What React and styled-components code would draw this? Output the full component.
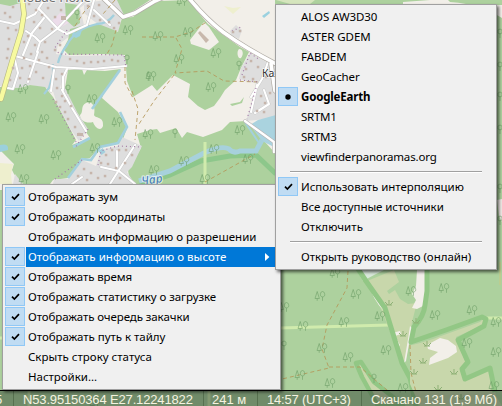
import React from 'react';
import styled, { createGlobalStyle } from 'styled-components';

const GlobalStyle = createGlobalStyle`
  html, body { margin: 0; padding: 0; overflow: hidden; }
`;

const Viewport = styled.main`
  position: relative;
  width: 502px;
  height: 406px;
  overflow: hidden;
  display: flex;
  flex-direction: column;
  justify-content: flex-end;
`;

const MapCanvas = styled.svg`
  position: absolute;
  inset: 0;
`;

const Menu = styled.div`
  position: absolute;
  left: ${(p) => p.$x}px;
  top: ${(p) => p.$y}px;
  width: ${(p) => p.$w}px;
  box-sizing: border-box;
  padding: 2px;
  border: 1px solid #a0a0a0;
  background: #f0f0f0;
  box-shadow: 2px 2px 3px rgba(0, 0, 0, 0.6);
  font: 11.5px/20px 'Noto Sans', sans-serif;
  color: #000;
`;

const MenuRow = styled.div`
  display: flex;
  height: 20px;
`;

const Mark = styled.span`
  box-sizing: border-box;
  flex: none;
  width: 20px;
  height: 19px;
  display: flex;
  align-items: center;
  justify-content: center;
  border: 1px solid ${(p) => (p.$on ? '#90c8f6' : 'transparent')};
  background: ${(p) => (p.$on ? '#c0dcf3' : 'transparent')};
`;

const Label = styled.span`
  flex: 1;
  height: 20px;
  margin-left: 1px;
  padding-left: 2px;
  white-space: nowrap;
  letter-spacing: ${(p) => p.$ls ?? -0.03}px;
  font-weight: ${(p) => (p.$bold ? 700 : 400)};
  color: ${(p) => (p.$active ? '#fff' : '#000')};
  background: ${(p) => (p.$active ? '#0078d7' : 'transparent')};
  display: flex;
  align-items: center;
  justify-content: space-between;
`;

const Arrow = styled.svg`
  margin-right: 8px;
`;

const Separator = styled.div`
  height: 10px;
  box-sizing: border-box;
  padding: 4px 12px 0;
  &::before {
    content: '';
    display: block;
    height: 1px;
    background: #a0a0a0;
    border-bottom: 1px solid #fff;
  }
`;

const StatusBar = styled.footer`
  position: relative;
  height: 16px;
  box-sizing: border-box;
  border-top: 1px solid #000;
  background: rgba(35, 50, 38, 0.44);
  display: flex;
  font: 13px/15px 'Liberation Sans', sans-serif;
  color: #f5f3e0;
`;

const StatusCell = styled.div`
  box-sizing: border-box;
  flex: none;
  width: ${(p) => p.$w}px;
  padding-left: ${(p) => p.$pad}px;
  text-indent: ${(p) => p.$shift || 0}px;
  border-right: 1px solid #56704f;
  white-space: nowrap;
  letter-spacing: ${(p) => p.$ls || 0}px;
  line-height: 17px;
  &:last-child { border-right: 0; }
`;

const Check = () => (
  <svg width="9" height="8" viewBox="0 0 9 8">
    <path d="M1 3.6 L3.4 6 L8 1.2" fill="none" stroke="#000" strokeWidth="1.7" />
  </svg>
);

const Dot = () => (
  <svg width="6" height="6" viewBox="0 0 6 6">
    <circle cx="3" cy="3" r="2.7" />
  </svg>
);

function Item({ text, mark, ls, bold, active }) {
  return (
    <MenuRow>
      <Mark $on={!!mark}>
        {mark === 'check' && <Check />}
        {mark === 'dot' && <Dot />}
      </Mark>
      <Label $ls={ls} $bold={bold} $active={active}>
        {text}
        {active && (
          <Arrow width="5" height="8" viewBox="0 0 5 8">
            <path d="M0 0 L4.4 4 L0 8Z" fill="#fff" />
          </Arrow>
        )}
      </Label>
    </MenuRow>
  );
}

const statusItems = [
  { text: 'Отображать зум', mark: 'check' },
  { text: 'Отображать координаты', mark: 'check', ls: -0.05 },
  { text: 'Отображать информацию о разрешении', ls: 0 },
  { text: 'Отображать информацию о высоте', mark: 'check', active: true, ls: 0.04 },
  { text: 'Отображать время', mark: 'check', ls: -0.09 },
  { text: 'Отображать статистику о загрузке', mark: 'check', ls: -0.07 },
  { text: 'Отображать очередь закачки', mark: 'check', ls: -0.09 },
  { text: 'Отображать путь к тайлу', mark: 'check', ls: -0.04 },
  { text: 'Скрыть строку статуса', ls: 0 },
  { text: 'Настройки...' },
];

const sources = [
  { text: 'ALOS AW3D30', ls: -0.07 },
  { text: 'ASTER GDEM', ls: -0.05 },
  { text: 'FABDEM' },
  { text: 'GeoCacher', ls: -0.08 },
  { text: 'GoogleEarth', mark: 'dot', bold: true, ls: -0.16 },
  { text: 'SRTM1', ls: -0.25 },
  { text: 'SRTM3', ls: -0.25 },
  { text: 'viewfinderpanoramas.org', ls: -0.17 },
];

const sourceOptions = [
  { text: 'Использовать интерполяцию', mark: 'check', ls: -0.06 },
  { text: 'Все доступные источники', ls: -0.06 },
  { text: 'Отключить', ls: 0.05 },
];

const trees = [
  [100, 38], [128, 30], [23, 89], [92, 99], [11, 117], [44, 119], [117, 122], [20, 149], [56, 155], [95, 148],
  [24, 179], [158, 36], [188, 32], [216, 53], [179, 59], [151, 76], [211, 87], [148, 134], [240, 130], [214, 149],
  [184, 161], [154, 170], [205, 179], [248, 159], [182, 1], [320, 296], [356, 294], [303, 326], [344, 322],
  [322, 348], [348, 357], [386, 350], [300, 375], [330, 383], [335, 273], [411, 291], [444, 288], [435, 315],
  [472, 310], [467, 343], [380, 316], [496, 322], [496, 352], [494, 386], [403, 388], [284, 307], [95, 403],
];
const singleTrees = [[77, 14], [127, 59], [149, 76], [68, 89], [175, 133], [239, 65], [500, 33], [500, 66], [500, 96], [500, 129], [500, 188], [500, 220], [284, 345], [374, 378]];
const grass = [[389, 303], [416, 321], [403, 334], [427, 344], [423, 361], [414, 372], [454, 372], [438, 388], [461, 397]];

const houses = [
  [8, 28], [9, 39], [8, 49], [16, 30], [13, 68], [10, 80], [7, 58], [24, 42], [28, 36], [34, 22], [40, 28], [35, 45],
  [31, 54], [42, 52], [45, 42], [24, 58], [22, 68], [20, 78], [30, 66], [36, 72], [29, 79], [39, 60], [47, 58], [49, 67],
  [43, 78], [56, 79], [62, 74], [57, 88], [62, 96], [55, 50], [60, 45], [70, 59], [77, 61], [84, 63], [91, 62], [98, 62],
  [104, 61], [112, 60], [118, 61], [36, 10], [42, 15], [48, 8], [55, 17], [61, 10], [13, 7], [5, 13], [29, 4], [52, 29],
  [94, 16], [100, 20], [109, 22], [114, 28], [119, 23], [88, 6], [99, 5], [10, 17], [56, 102], [60, 107], [65, 112],
  [68, 119], [75, 127], [79, 134], [71, 106], [65, 101], [106, 155], [101, 163], [112, 150], [119, 150], [126, 150],
  [132, 155], [108, 164], [116, 168], [125, 163], [84, 169], [91, 173], [78, 176], [87, 180], [98, 178], [105, 176],
  [120, 178], [233, 32], [240, 31], [246, 69], [251, 61], [258, 67], [266, 77], [244, 77], [253, 79], [261, 96], [265, 103],
  [257, 111], [270, 93], [264, 112],
];

const minorRoads = 'M0 21L14 24L25 19L35 14L44 0M15 56L56 67L92 69L126 66M39 9L58 29L67 34L87 25L94 0M37 52L40 42L57 29L84 0M23 55L32 33L44 18M26 31L35 37L40 42M28 82L38 52M54 70L51 91M67 69L63 77V90M14 56L18 73L13 89L3 87M94 10L110 25M62 90L72 108L86 131M135 145L110 184M101 167L119 171L135 184M82 177L72 184M117 167V151M268 62L262 79L251 97M251 112L257 85M264 90L269 104L255 113';
const mainRoads = 'M103 -2L123 17L135 13L155 1L162 -2M188 -3Q205 18 223 32Q245 48 278 65M271 64L275 91';

const Tree = ({ x, y }) => (
  <path
    transform={`translate(${x} ${y})`}
    d="M-2.8 -4.5 L-5 2.5 H-.6Z M-2.8 2.5 V4.8 M2.5 -4.5 C.4 -4.5 .2 -1.5 .6 -.2 C1 1.2 4 1.2 4.6 -.2 C5 -1.5 4.6 -4.5 2.5 -4.5Z M2.5 1 V4.8"
  />
);

function MapLayer() {
  return (
    <MapCanvas width="502" height="406" viewBox="0 0 502 406">
      <rect width="502" height="406" fill="#f2efe9" />

      <g fill="#dedede">
        <path d="M0 0H90L80 8L84 25L58 45L56 54L70 56L124 55L126 66L66 69L60 88L45 88L30 85L18 88L0 86Z" />
        <path d="M84 5L92 2L105 0H150L130 15L121 18L119 32L100 26L84 13Z" />
      </g>
      <path d="M0 0H20V3L10 6L0 4Z" fill="#add19e" />
      <path d="M50 23L60 13L66 14L70 22L58 29Z" fill="#ecdcea" />

      <g fill="#add19e">
        <path d="M0 87L20 88L30 85L45 87L53 97L57 104L76 140L72 145L90 138L78 120L68 100L65 88L68 70L82 69L84 75L87 70L105 71L121 69L105 91L102 98L118 112L127 128L122 142L100 147L90 158L80 160L68 178L53 180L50 184H22L14 174L12 170L14 164L0 150Z" />
        <path d="M65 3L79 5L80 23L74 27L66 20Z" />
        <path d="M70 29L85 25L101 25L114 30L118 32L122 18L133 17L140 11L160 1L188 0L208 24L240 47L249 52L241 68L236 80L225 90L220 98L214 106L205 110L198 106L188 97L190 84L173 75L157 91L152 85L133 97L127 81L125 55L100 54L69 55L63 49L68 40Z" />
        <path d="M117 0H150L130 13L124 15Z" />
        <path d="M137 134L150 130L157 129L160 133L176 128L182 138L187 132L203 137L222 130L230 122L246 121L275 153V400H235V184H130L128 170L141 148Z" />
        <path d="M230 104L240 102L244 97L242 103L232 106Z" />
        <rect x="275" width="227" height="406" />
        <rect y="190" width="5" height="216" />
        <rect y="384" width="280" height="22" />
      </g>
      <path d="M0 163L13 164L11 175L12 184H0Z" fill="#eeefce" />
      <path d="M224 6L233 8L241 7L233 14Z" fill="#eeefce" />
      <path d="M86 103C92 101 96 106 94 115C96 119 104 116 103 126C101 132 95 128 93 122C87 124 80 121 80 115C84 112 80 106 86 103Z" fill="#f2efe9" />
      <path d="M190 40L204 22L209 27L219 42L209 50L191 44Z" fill="#f2efe9" />
      <path d="M239 49C236 52 238 60 241 58C244 54 243 49 239 49Z" fill="#f2efe9" />
      <path d="M200 31L209 40L206 43L198 33Z" fill="#c8b8ac" />

      <g fill="#dedede">
        <path d="M52 88H65L77 112L88 129L79 141L71 130L57 104Z" />
        <path d="M122 137L142 146L132 167L127 172L135 184H53L54 179L68 179L82 160L96 166L101 150L118 146Z" />
        <path d="M13 184L15 174L23 184Z" />
        <path d="M230 31L236 25L242 30L239 39L231 35Z" />
        <path d="M250 53L276 67V118L246 121L258 84L239 79L241 68Z" />
      </g>

      <path d="M276 115L258 120L250 125L262 141L276 148Z" fill="#aad3df" />
      <path d="M262 16L269 11L270 13L264 18Z" fill="#9bd1df" />
      <path d="M0 145Q9 143 8 150L0 152Z" fill="#9bd0dc" />
      <path d="M72 36L73 31L76 33L82 30L80 36L76 38Z" fill="#9ed3df" />
      <g fill="none" stroke="#a3d0dd" strokeWidth="2.6">
        <path d="M114 15Q107 24 97 24Q75 29 67 45Q60 54 58 63" strokeWidth="2.3" />
        <path d="M53 64V74L49 88L44 94" strokeWidth="2.2" />
        <path d="M120 70L92 109" /><path d="M73 147L90 138" />
        <path d="M120 112L127 127L118 143L100 147L91 160L82 159L68 178" />
        <path d="M100 153L104 150" strokeWidth="5" />
        <path d="M245 122L259 143" strokeWidth="2" />
      </g>
      <path d="M140 185L170 175L201 161L230 156L256 155L276 174" fill="none" stroke="#8dc78b" strokeWidth="5" />
      <path d="M139 181L170 171L204 153Q222 145 229 149Q233 154 240 151L256 151L262 140" fill="none" stroke="#a7d1dc" strokeWidth="5" />

      <g stroke="#d0ebad" fill="none">
        <path d="M205 142V184" strokeWidth="3" />
        <path d="M280 328L389 325M484 318H502M0 338H5" strokeWidth="2.8" />
        <path d="M29 390V406M209 390V406" strokeWidth="3" />
      </g>

      <path d="M276 0H315L310 4H290Z" fill="#d5e5bd" />
      <path d="M403 2L430 0H448L450 2Q485 5 495 14L502 18V5H403Z" fill="#f2efe9" />
      <path d="M497 200L502 199V222L499 216Z" fill="#eee8e4" />
      <path d="M500 262V285" stroke="#c9c883" />

      <g strokeLinejoin="round">
        <path d="M356 270L363 281L374 275L384 270Z" fill="#d9e8da" />
        <path d="M367 281L394 270L399 282L387 291L389 294L395 290L400 299L408 304L417 303L413 318L410 332L409 345L406 359L401 363L392 337L382 311Z" fill="#c8d7ab" />
        <path d="M417 270H425V305L417 309L412 308L416 300L412 294L416 286Z" fill="#f2efe9" />
        <path d="M368 281Q372 299 384 311L381 302Z M392 333L400 331L401 334L395 336L400 345L397 349L392 338Z M410 326L413 329L410 338L406 361L404 363L408 339Z" fill="#f2efe9" />
        <path d="M356 266L366 281L385 308L402 363L410 378L416 406" fill="none" stroke="#92c785" strokeWidth="5" />
        <path d="M412 345L420 343L433 339L441 336L480 322L483 319V325L456 337L466 364L461 371L466 379L491 367L496 396L502 406H420L410 384L410 345Z" fill="#c8d7ab" />
        <path d="M427 270V291L425 305Q424 316 414 327L411 342L446 330L482 317L486 319L484 326L458 340L468 362L462 369L465 379L490 368L495 392" fill="none" stroke="#92c785" strokeWidth="5" />
        <path d="M427 345L440 338L448 340L456 346L457 352L448 358L429 365L430 358L438 352L428 349Z" fill="#f2efe9" />
        <path d="M356 363L361 362L374 382L393 397L403 406H378L362 377Z" fill="#c8d7ab" stroke="#92c785" strokeWidth="4.5" />
      </g>

      <g fill="none" strokeLinecap="round" strokeLinejoin="round">
        <path d={minorRoads} stroke="#c8c8c8" strokeWidth="3" />
        <path d={minorRoads} stroke="#fff" strokeWidth="2.1" />
        <path d={mainRoads} stroke="#b1ada6" strokeWidth="5" />
        <path d={mainRoads} stroke="#fff" strokeWidth="3.6" />
        <path d="M245 121L274 142V152" stroke="#b8b4b4" strokeWidth="3.5" />
        <path d="M245 121L274 142V152" stroke="#fff" strokeWidth="2.4" />
        <path d="M22 -2L24 14L21 32L13 58L1 99" stroke="#b5b684" strokeWidth="5.6" />
        <path d="M22 -2L24 14L21 32L13 58L1 99" stroke="#f7fa9f" strokeWidth="4.3" />
      </g>

      <g fill="none" stroke="#b49658" strokeOpacity=".85" strokeWidth="1" strokeDasharray="4 3">
        <path d="M142 37H175L191 32L208 21M176 38L182 49L175 73L207 71L224 81L260 82M174 75L154 101L139 124M116 30L112 45L107 54M205 182L255 154M125 67V83L133 98M132 91L138 109L135 140" />
        <path d="M348 271L347 288L327 325L322 349L329 368L282 379M329 367H360L387 390M410 345L411 373L416 392" />
        <path d="M75 26L84 12L92 4M115 0L103 14" />
      </g>
      <g fill="none" stroke="#a47ba5" strokeWidth="1.2" strokeDasharray="1 3">
        <path d="M67 30L54 49L60 54L124 55L126 68M53 99L76 142M88 129L75 148M98 165L101 151L117 146L142 147M82 160L55 179M242 75L250 53L260 60M240 80L259 82M232 31L241 27M256 88L247 119" />
      </g>
      <g fill="#c6b5ab">
        {houses.map(([x, y]) => <rect key={`${x}-${y}`} x={x - 1.2} y={y - 1.2} width="2.5" height="2.5" />)}
        <rect x="61" y="16" width="5" height="4" /><rect x="77" y="133" width="6" height="3" />
      </g>

      <g fill="none" stroke="#6f9f68" strokeOpacity=".75" strokeWidth="0.8">
        {trees.map(([x, y]) => <Tree key={`${x}-${y}`} x={x} y={y} />)}
        {singleTrees.map(([x, y]) => (
          <path key={`${x}-${y}`} d={`M${x} ${y - 4}q-3 0 -2 4q2 2 4 0q1 -4 -2 -4M${x} ${y}v5`} />
        ))}
      </g>
      <g fill="none" stroke="#8fb177" strokeWidth="1">
        {grass.map(([x, y]) => <path key={`${x}-${y}`} d={`M${x - 3} ${y + 2}h6m-3 0v-5m-1 5l-3 -3m5 3l3 -3`} />)}
      </g>

      <g fontFamily="Noto Sans, sans-serif" paintOrder="stroke" stroke="#fff" strokeLinejoin="round">
        <text x="17" y="2.4" fontSize="13" textLength="74" strokeWidth="2" strokeOpacity=".6" fill="#707070">Новае Поле</text>
        <text x="262" y="77" fontSize="10.5" strokeWidth="1.5" strokeOpacity=".7" fill="#333">Каз</text>
        <text transform="translate(142 185) rotate(-8)" fontSize="11.5" fontStyle="italic" fontWeight="500" strokeWidth="2" strokeOpacity=".7" textLength="21" fill="#4d82b8">Чар</text>
      </g>
    </MapCanvas>
  );
}

export default function App() {
  return (
    <Viewport>
      <GlobalStyle />
      <MapLayer />
      <StatusBar>
        <StatusCell $w={14} $pad={0} $shift={-5}>5</StatusCell>
        <StatusCell $w={190} $pad={9} $ls={-0.15}>N53.95150364 E27.12241822</StatusCell>
        <StatusCell $w={54} $pad={8}>241 м</StatusCell>
        <StatusCell $w={104} $pad={9} $ls={-0.2}>14:57 (UTC+3)</StatusCell>
        <StatusCell $w={140} $pad={9} $ls={-0.12}>Скачано 131 (1,9 Мб)</StatusCell>
      </StatusBar>
      <Menu $x={2} $y={184} $w={279}>
        {statusItems.map((it) => <Item key={it.text} {...it} />)}
      </Menu>
      <Menu $x={275} $y={4} $w={222}>
        {sources.map((it) => <Item key={it.text} {...it} />)}
        <Separator />
        {sourceOptions.map((it) => <Item key={it.text} {...it} />)}
        <Separator />
        <Item text="Открыть руководство (онлайн)" ls={-0.04} />
      </Menu>
    </Viewport>
  );
}
